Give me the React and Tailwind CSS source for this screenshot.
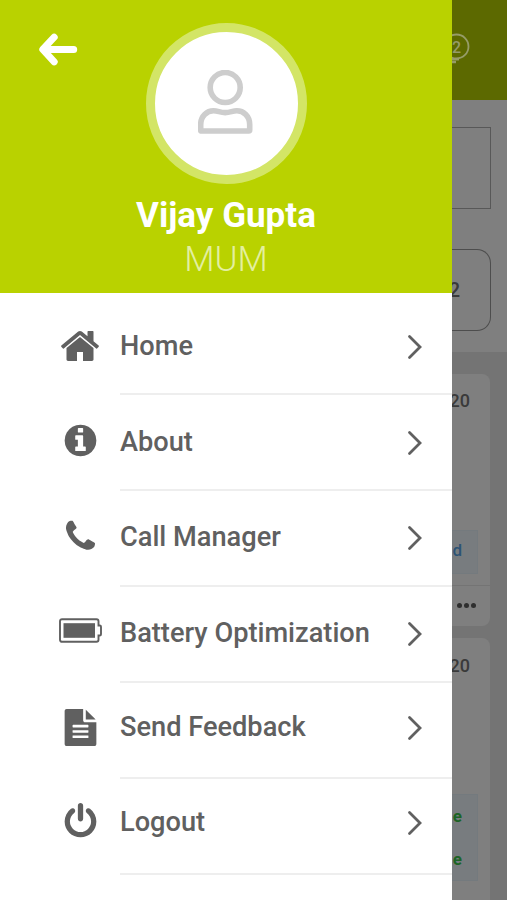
import React from 'react';

const HomeIcon = () => (
    <svg viewBox="0 0 1792 1792" className="w-[42px] h-[42px] mb-0.5" fill="currentColor">
        <path d="M1472 992v480q0 26-19 45t-45 19h-384v-384h-256v384h-384q-26 0-45-19t-19-45v-480q0-1 .5-3t.5-3l575-474 575 474q1 2 1 6zm223-69l-62 74q-8 9-21 11h-3q-13 0-21-7l-692-577-692 577q-12 8-24 7-13-2-21-11l-62-74q-8-10-7-23.5t11-21.5l719-599q32-26 76-26t76 26l244 204v-195q0-14 9-23t23-9h192q14 0 23 9t9 23v408l219 182q10 8 11 21.5t-7 23.5z" />
    </svg>
);

const AboutIcon = () => (
    <svg viewBox="0 0 1792 1792" className="w-[37px] h-[37px] mb-1" fill="currentColor">
        <path d="M1152 1376v-160q0-14-9-23t-23-9h-96v-512q0-14-9-23t-23-9h-320q-14 0-23 9t-9 23v160q0 14 9 23t23 9h96v320h-96q-14 0-23 9t-9 23v160q0 14 9 23t23 9h448q14 0 23-9t9-23zm-128-896v-160q0-14-9-23t-23-9h-192q-14 0-23 9t-9 23v160q0 14 9 23t23 9h192q14 0 23-9t9-23zm640 416q0 209-103 385.5t-279.5 279.5-385.5 103-385.5-103-279.5-279.5-103-385.5 103-385.5 279.5-279.5 385.5-103 385.5 103 279.5 279.5 103 385.5z" />
    </svg>
);

const PhoneIcon = () => (
    <svg viewBox="0 0 1792 1792" className="w-[37px] h-[37px] mb-0.5" fill="currentColor">
        <path d="M1600 1240q0 27-10 70.5t-21 68.5q-21 50-122 106-94 51-186 51-27 0-52.5-3.5t-57.5-12.5-47.5-14.5-55.5-20.5-49-18q-98-35-175-83-128-79-264.5-215.5t-215.5-264.5q-48-77-83-175-3-9-18-49t-20.5-55.5-14.5-47.5-12.5-57.5-3.5-52.5q0-92 51-186 56-101 106-122 25-11 68.5-21t70.5-10q14 0 21 3 18 6 53 76 11 19 30 54t35 63.5 31 53.5q3 4 17.5 25t21.5 35.5 7 28.5q0 20-28.5 50t-62 55-62 53-28.5 46q0 9 5 22.5t8.5 20.5 14 24 11.5 19q76 137 174 235t235 174q2 1 19 11.5t24 14 20.5 8.5 22.5 5q18 0 46-28.5t53-62 55-62 50-28.5q14 0 28.5 7t35.5 21.5 25 17.5q25 15 53.5 31t63.5 35 54 30q70 35 76 53 3 7 3 21z" />
    </svg>
);

const BatteryIcon = () => (
    <svg viewBox="0 0 43 25" className="w-[43px] h-[25px] mb-1.5" fill="none" stroke="currentColor">
        <path d="M3 1.2h34.5a2 2 0 0 1 2 2v4.300h1.200a1.300 1.300 0 0 1 1.300 1.300v7.400a1.300 1.300 0 0 1-1.300 1.300h-1.200v4.300a2 2 0 0 1-2 2H3a2 2 0 0 1-2-2V3.200a2 2 0 0 1 2-2z" strokeWidth="1.9" />
        <rect x="4.5" y="5.2" width="31.5" height="14.6" fill="currentColor" stroke="none" />
    </svg>
);

const FileIcon = () => (
    <svg viewBox="0 0 1792 1792" className="w-[37px] h-[37px]" fill="currentColor">
        <path d="M1596 476q14 14 28 36h-472v-472q22 14 36 28zm-476 164h544v1056q0 40-28 68t-68 28h-1344q-40 0-68-28t-28-68v-1600q0-40 28-68t68-28h800v544q0 40 28 68t68 28zm160 736v-64q0-14-9-23t-23-9h-704q-14 0-23 9t-9 23v64q0 14 9 23t23 9h704q14 0 23-9t9-23zm0-256v-64q0-14-9-23t-23-9h-704q-14 0-23 9t-9 23v64q0 14 9 23t23 9h704q14 0 23-9t9-23zm0-256v-64q0-14-9-23t-23-9h-704q-14 0-23 9t-9 23v64q0 14 9 23t23 9h704q14 0 23-9t9-23z" />
    </svg>
);

const PowerIcon = () => (
    <svg viewBox="0 0 1792 1792" className="w-[37px] h-[37px] mb-0.5" fill="currentColor">
        <path d="M1664 896q0 156-61 298t-164 245-245 164-298 61-298-61-245-164-164-245-61-298q0-182 80.5-343t226.5-270q43-32 95.5-25t83.5 50q32 42 24.5 94.5t-49.5 84.5q-98 74-151.5 181t-53.5 228q0 104 40.5 198.5t109.5 163.5 163.5 109.5 198.5 40.5 198.5-40.5 163.5-109.5 109.5-163.5 40.5-198.5q0-121-53.5-228t-151.5-181q-42-32-49.5-84.5t24.5-94.5q31-43 84-50t95 25q146 109 226.5 270t80.5 343zm-640-768v640q0 52-38 90t-90 38-90-38-38-90v-640q0-52 38-90t90-38 90 38 38 90z" />
    </svg>
);

const menuItems = [
    { label: 'Home', Icon: HomeIcon, pad: 'pb-px' },
    { label: 'About', Icon: AboutIcon, pad: 'pb-px' },
    { label: 'Call Manager', Icon: PhoneIcon, pad: 'pb-[3px]' },
    { label: 'Battery Optimization', Icon: BatteryIcon, pad: 'pb-[3px]' },
    { label: 'Send Feedback', Icon: FileIcon, pad: 'pb-[7px]' },
    { label: 'Logout', Icon: PowerIcon, pad: 'pb-[9px]' },
];

const MenuItem = ({ label, Icon, pad }) => (
    <li className="flex h-24 text-[#606060]">
        <div className={`w-[120px] pl-10 flex items-center justify-center ${pad}`}>
            <Icon />
        </div>
        <div className={`flex-1 flex items-center justify-between border-b-2 border-[#eeeeee] pr-[29px] ${pad}`}>
            <span className="text-[27.2px] leading-8 font-medium whitespace-nowrap">{label}</span>
            <svg viewBox="0 0 16 26" className="w-4 h-[26px] mt-[3px]" fill="none" stroke="currentColor" strokeWidth="2.8" strokeLinecap="round" strokeLinejoin="miter">
                <path d="M2.5 2.5 13 13 2.5 23.5" />
            </svg>
        </div>
    </li>
);

const Drawer = () => (
    <aside className="w-[452px] shrink-0 bg-white">
        <header className="h-[293px] bg-[#b9d200] flex flex-col items-center relative pt-[23px]">
            <button className="absolute left-[38px] top-[32px]">
                <svg viewBox="0 0 42 34" className="w-[42px] h-[34px]" fill="none" stroke="#ffffff" strokeWidth="7" strokeLinecap="round" strokeLinejoin="round">
                    <path d="M16.2 5.2 4.8 17.4l11.4 12.4M5.5 17.4h30.2" />
                </svg>
            </button>
            <div className="w-[161px] h-[161px] rounded-full border-[9.5px] border-[#d3e566] bg-white flex items-center justify-center">
                <svg viewBox="0 0 56 64" className="w-14 h-16 mb-1" fill="none" stroke="#cdcdcd" strokeWidth="5.6" strokeLinejoin="round">
                    <circle cx="27.2" cy="17.5" r="15" />
                    <path d="M2.700 60V54.500C2.700 46 9 40.800 15.500 40.800c4.500 0 6.500 1.800 11.700 1.800s7.200-1.800 11.700-1.800C45.500 40.800 51.700 46 51.700 54.500V60q0 1-1 1H3.700q-1 0-1-1z" />
                </svg>
            </div>
            <h1 className="mt-[12px] text-[35px] leading-[40px] font-bold text-white">Vijay Gupta</h1>
            <p className="mt-[4px] text-[35px] leading-[40px] font-light text-[#e3efa0]">MUM</p>
        </header>
        <ul className="pt-[6px]">
            {menuItems.map((item) => (
                <MenuItem key={item.label} {...item} />
            ))}
        </ul>
    </aside>
);

// Dimmed edge of the page that stays visible next to the open drawer
const PageEdge = () => (
    <main className="flex-1 h-[900px] overflow-hidden bg-[#747474] text-[#3a3a3a]">
        <div className="h-[100px] bg-[#5c6900] pt-[32px]">
            <svg viewBox="0 0 20 34" className="w-5 h-[34px]" fill="none" stroke="#969c68" strokeWidth="1.8">
                <circle cx="4.500" cy="14.500" r="12" />
                <path d="M-2 27.200h9" strokeWidth="2.500" />
                <path d="M-1 30h5" strokeWidth="2.500" />
                <text x="0" y="20.500" fontSize="16" fontWeight="500" fill="#969c68" stroke="none">2</text>
            </svg>
        </div>
        <div className="h-[252px] bg-[#7f7f7f] pt-[27px]">
            <div className="w-[39px] h-[82px] border border-l-0 border-[#585858]" />
            <div className="mt-10 w-[39px] h-[82px] border border-l-0 border-[#4d4d4d] rounded-r-[14px] flex items-center justify-end pr-[30px] text-[20px] font-medium">
                <span>2</span>
            </div>
        </div>
        <section className="mt-[22px] w-[38px] h-[252px] bg-[#7f7f7f] rounded-tr-[8px] rounded-br-[8px] flex flex-col">
            <div className="h-[156px] flex justify-end pt-[15px] pr-5 text-[18px] leading-6 font-medium">
                <span>20</span>
            </div>
            <div className="w-[26px] h-11 bg-[#787c7f] border border-l-0 border-[#747a7e] flex items-center justify-end pr-[15px] pb-0.5 text-[17px] font-medium text-[#2c5375]">
                <span>d</span>
            </div>
            <div className="mt-[11px] flex-1 border-t border-[#747474] flex items-center gap-[2px] pl-[5px] pb-0.5">
                <i className="w-[5px] h-[5px] rounded-full bg-[#2e2e2e]" />
                <i className="w-[5px] h-[5px] rounded-full bg-[#2e2e2e]" />
                <i className="w-[5px] h-[5px] rounded-full bg-[#2e2e2e]" />
            </div>
        </section>
        <section className="mt-3 w-[38px] h-[262px] bg-[#7f7f7f] rounded-tr-[8px]">
            <div className="h-[156px] flex justify-end pt-[16px] pr-5 text-[18px] leading-6 font-medium">
                <span>20</span>
            </div>
            <div className="w-[26px] h-[87px] bg-[#787c7f] border border-l-0 border-[#747a7e] flex flex-col items-end pr-[15px] text-[17px] font-bold text-[#1c6426]">
                <span className="h-[43px] leading-[42px]">e</span>
                <span className="h-[43px] leading-[42px]">e</span>
            </div>
        </section>
    </main>
);

export default function App() {
    return (
        <div className="flex w-[507px] h-[900px] overflow-hidden font-[Roboto,sans-serif]">
            <Drawer />
            <PageEdge />
        </div>
    );
}
